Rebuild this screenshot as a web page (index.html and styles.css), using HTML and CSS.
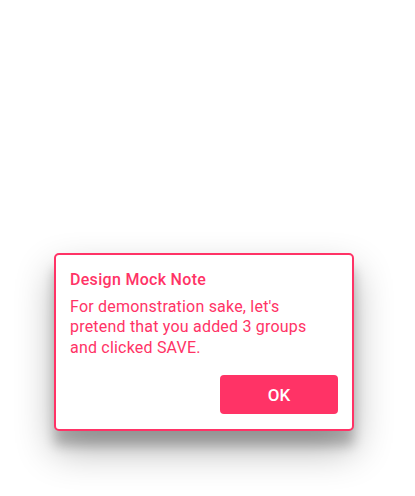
FILE: index.html
```html
<!DOCTYPE html>
<html>
<head>
<meta charset="utf-8">
<link rel="stylesheet" href="styles.css">
</head>
<body>
<div class="page">
  <div class="dialog">
    <div class="title">Design Mock Note</div>
    <div class="message">For demonstration sake, let's pretend that you added 3 groups and clicked SAVE.</div>
    <div class="actions">
      <button class="ok">OK</button>
    </div>
  </div>
</div>
</body>
</html>
```

FILE: styles.css
```css
html, body {
  margin: 0;
  padding: 0;
  background: #ffffff;
}
.page {
  width: 415px;
  height: 496px;
  padding: 253px 0 0 54px;
  box-sizing: border-box;
}
.dialog {
  width: 300px;
  height: 178px;
  box-sizing: border-box;
  border: 2px solid #ff3366;
  border-radius: 5px;
  background: #fff;
  box-shadow: 0 19px 38px rgba(0, 0, 0, 0.30), 0 15px 12px rgba(0, 0, 0, 0.22);
  padding: 14.5px 14px 15px 14px;
  display: flex;
  flex-direction: column;
  font-family: Roboto, "Noto Sans", sans-serif;
  color: #ff3366;
}
.title {
  font-size: 16px;
  font-weight: 500;
  line-height: 20px;
  letter-spacing: 0.3px;
}
.message {
  margin-top: 7px;
  max-width: 250px;
  font-size: 16px;
  line-height: 20.5px;
  letter-spacing: 0.2px;
}
.actions {
  margin-top: auto;
  display: flex;
  justify-content: flex-end;
}
.ok {
  width: 118px;
  height: 39px;
  border: none;
  border-radius: 4px;
  background: #ff3366;
  color: #fff;
  font-family: Roboto, "Noto Sans", sans-serif;
  font-size: 17px;
  font-weight: 500;
  padding: 0;
}
```
